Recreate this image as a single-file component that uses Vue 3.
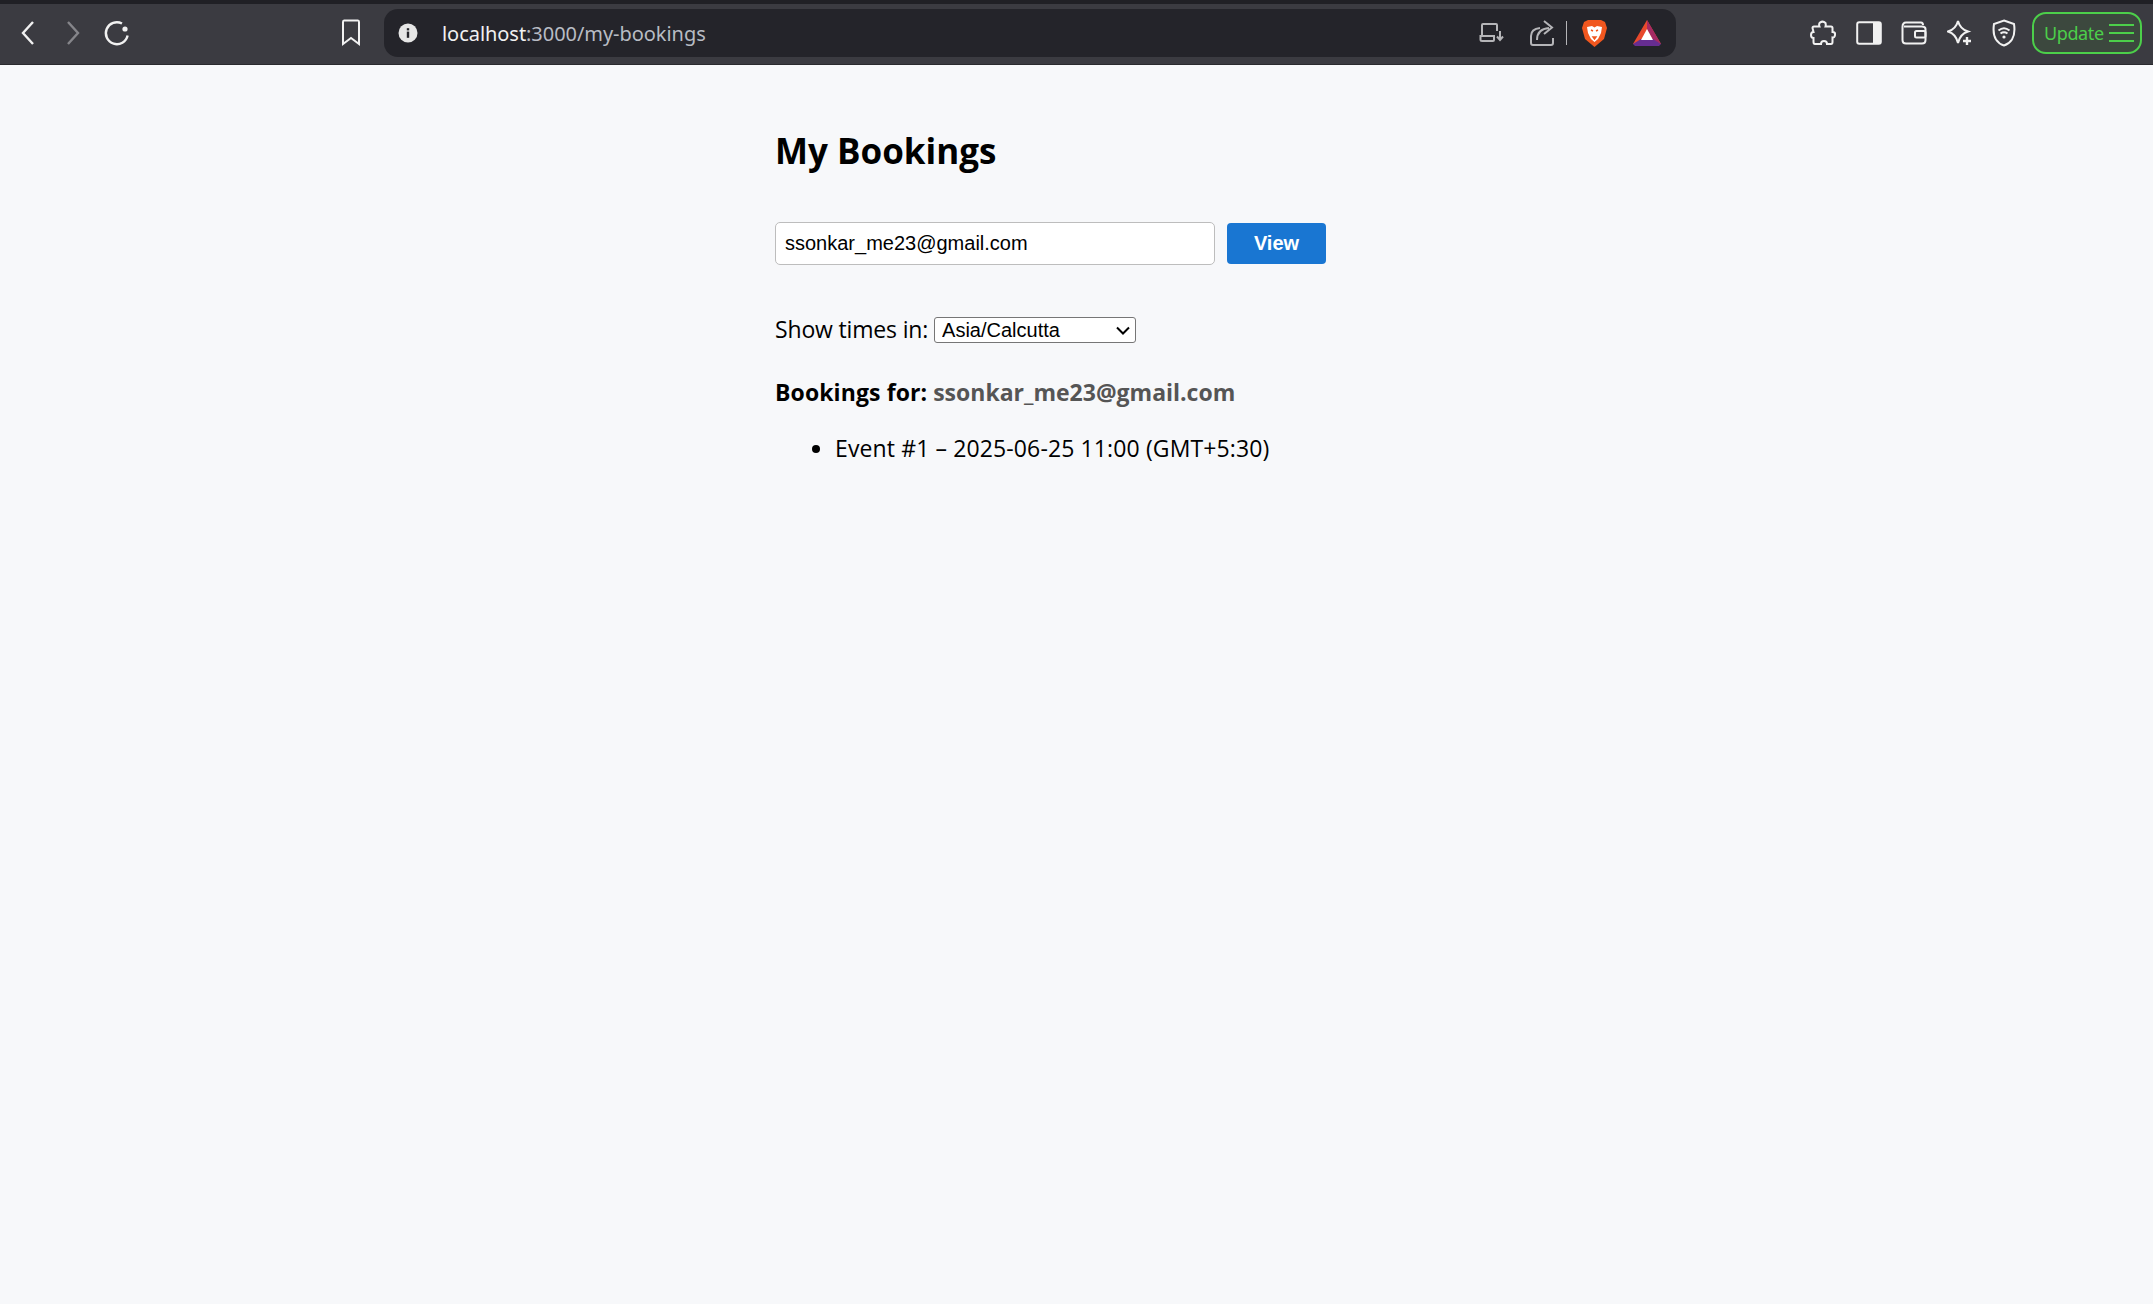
<template>
  <div class="page">
    <header class="toolbar">
      <div class="nav">
        <button class="tool back">
          <svg width="18" height="26" viewBox="0 0 18 26"><path d="M14 2 L4 13 L14 24" class="stroke" /></svg>
        </button>
        <button class="tool forward">
          <svg width="18" height="26" viewBox="0 0 18 26"><path d="M4 2 L14 13 L4 24" class="stroke dim" /></svg>
        </button>
        <button class="tool reload">
          <svg width="28" height="28" viewBox="0 0 28 28">
            <path d="M19 4.5 A11 11 0 1 0 24.6 16.5" class="stroke" />
            <circle cx="22" cy="10" r="2.6" fill="#f1f1f1" />
          </svg>
        </button>
      </div>
      <button class="tool bookmark">
        <svg width="20" height="28" viewBox="0 0 20 28"><path d="M3 1.5 H17 Q18 1.5 18 3 V25 L10 19 L2 25 V3 Q2 1.5 3 1.5 Z" class="stroke thin" /></svg>
      </button>
      <div class="address">
        <svg class="info" width="20" height="20" viewBox="0 0 20 20">
          <circle cx="10" cy="10" r="9.5" fill="#e6e6e6" />
          <rect x="8.8" y="8.6" width="2.4" height="6.2" fill="#24242a" />
          <rect x="8.8" y="5.2" width="2.4" height="2.2" fill="#24242a" />
        </svg>
        <span class="url"><span class="host">localhost</span>:3000/my-bookings</span>
        <div class="address-actions">
          <svg width="26" height="22" viewBox="0 0 26 22" class="gray">
            <path d="M3 13 V3 Q3 2 4 2 H17 Q18 2 18 3 V9" class="stroke thin" />
            <path d="M1.5 14 H15 V18 Q15 19 14 19 H3 Q1.5 19 1.5 17.5 Z" class="stroke thin" />
            <path d="M21 9 V17 M18 14.5 L21 18 L24 14.5" class="stroke thin" />
          </svg>
          <svg width="26" height="28" viewBox="0 0 26 28" class="gray share">
            <path d="M11 9 Q2 10 2 17 V24 Q2 26 4 26 H22 Q24 26 24 24 V19" class="stroke thin" />
            <path d="M8 21 Q8 10 20 9 M15 2 L23 8.5 L15 15" class="stroke thin" />
          </svg>
          <span class="divider"></span>
          <svg width="25" height="28" viewBox="0 0 25 28" class="lion">
            <path d="M6 1 H19 L23 3 L25 9 L22 20 L12.5 28 L3 20 L0 9 L2 3 Z" fill="#f1571f" />
            <path d="M5 8 L10 7 L12.5 8.5 L15 7 L20 8 L19 14 L16 20 L12.5 23 L9 20 L6 14 Z" fill="#fff" />
            <path d="M9 11 L11 12 M16 11 L14 12 M11 18 H14 L12.5 20 Z" stroke="#f1571f" stroke-width="1.4" fill="#f1571f" />
          </svg>
          <svg width="28" height="26" viewBox="0 0 28 26" class="bat">
            <path d="M14 0 L28 24 H0 Z" fill="#e8492c" />
            <path d="M14 0 L28 24 L20 20 L14 9 Z" fill="#a52a63" />
            <path d="M0 24 L8 19 H20 L28 24 L26 26 H2 Z" fill="#662d91" />
            <path d="M14 9 L20 20 H8 Z" fill="#fff" />
          </svg>
        </div>
      </div>
      <div class="extensions">
        <svg width="26" height="26" viewBox="0 0 26 26">
          <path d="M10 2.5 Q13 0.5 15.5 3 Q16 5 15.5 6.5 H21 Q22.5 6.5 22.5 8 V12 Q25.5 12 25 15 Q24.5 18 22.5 17.5 V22 Q22.5 24 21 24 H17 Q17 21 14 21 Q11 21 11 24 H5 Q3.5 24 3.5 22 V18 Q1 18 1 15 Q1 12 3.5 12 L2.5 8 Q2.5 6.5 4 6.5 H9.5 Q8.5 4 10 2.5 Z" class="stroke thin" />
        </svg>
        <svg width="26" height="24" viewBox="0 0 26 24">
          <rect x="1.2" y="1.2" width="23.6" height="21.6" rx="2" class="stroke thin" />
          <rect x="17" y="1.2" width="7.8" height="21.6" fill="#f1f1f1" />
        </svg>
        <svg width="26" height="24" viewBox="0 0 26 24">
          <path d="M1.5 6 Q1.5 1.5 5 1.5 H20 Q22 1.5 22 4 M1.5 6 V19 Q1.5 22.5 5 22.5 H21 Q24.5 22.5 24.5 19 V8 Q24.5 5.5 21 5.5 H3" class="stroke thin" />
          <rect x="14" y="10" width="10.5" height="6.5" rx="1.5" class="stroke thin" />
        </svg>
        <svg width="26" height="28" viewBox="0 0 26 28">
          <path d="M11 2 Q13 10 21 12.5 Q13 15 11 24 Q9 15 1 12.5 Q9 10 11 2 Z" class="stroke thin" />
          <path d="M20 18 V26 M16 22 H24" class="stroke" />
        </svg>
        <svg width="24" height="28" viewBox="0 0 24 28">
          <path d="M12 1.5 L22 5 Q23.5 15 20 20.5 Q17 25 12 26.5 Q7 25 4 20.5 Q0.5 15 2 5 Z" class="stroke thin" />
          <path d="M6.5 11.5 Q12 7 17.5 11.5 M8.5 14.5 Q12 12 15.5 14.5" class="stroke thin" />
          <circle cx="12" cy="18" r="1.6" fill="#f1f1f1" />
        </svg>
      </div>
      <button class="update">
        <span>Update</span>
        <svg width="25" height="20" viewBox="0 0 25 20"><path d="M0 2 H25 M0 10 H25 M0 18 H25" stroke="#4ccf4a" stroke-width="2" /></svg>
      </button>
    </header>

    <main class="content">
      <h1>My Bookings</h1>
      <form class="lookup" @submit.prevent>
        <input v-model="email" type="email" />
        <button type="submit">View</button>
      </form>
      <div class="zone">
        <label for="tz">Show times in:</label>
        <div class="select-wrap">
          <select id="tz" v-model="zone">
            <option>Asia/Calcutta</option>
          </select>
          <svg class="caret" width="14" height="9" viewBox="0 0 14 9"><path d="M1 1.5 L7 7.5 L13 1.5" fill="none" stroke="#000" stroke-width="2" /></svg>
        </div>
      </div>
      <p class="for"><strong>Bookings for:</strong> <span>{{ email }}</span></p>
      <ul>
        <li v-for="b in bookings" :key="b.id">Event #{{ b.id }} – {{ b.when }}</li>
      </ul>
    </main>
  </div>
</template>

<script setup>
import { ref } from "vue";

const email = ref("ssonkar_me23@gmail.com");
const zone = ref("Asia/Calcutta");
const bookings = [{ id: 1, when: "2025-06-25 11:00 (GMT+5:30)" }];
</script>

<style scoped>
.page {
  min-height: 1304px;
  background: #f7f8fa;
  font-family: "Open Sans", "Noto Sans", sans-serif;
  color: #000;
}
.toolbar {
  height: 65px;
  box-sizing: border-box;
  border-top: 4px solid #202025;
  border-bottom: 1px solid #2a2a2e;
  background: #3b3b41;
  display: flex;
  align-items: center;
  padding-left: 19px;
  padding-right: 7px;
  padding-bottom: 2px;
}
.tool {
  background: none;
  border: 0;
  padding: 0;
  display: flex;
}
.nav {
  display: flex;
  align-items: center;
  gap: 27px;
  width: 322px;
}
.reload {
  margin-left: -6px;
}
.bookmark {
  margin-right: 23px;
}
.stroke {
  fill: none;
  stroke: #f1f1f1;
  stroke-width: 2.4;
}
.stroke.thin {
  stroke-width: 2;
}
.stroke.dim {
  stroke: #85858a;
}
.gray .stroke {
  stroke: #b5b5b8;
}
.address {
  width: 1292px;
  height: 48px;
  border-radius: 14px;
  background: #24242a;
  display: flex;
  align-items: center;
  padding-left: 14px;
  padding-right: 15px;
  box-sizing: border-box;
}
.url {
  margin-left: 24px;
  font-size: 20px;
  font-family: "Noto Sans", sans-serif;
  color: #b8bcc4;
  letter-spacing: -0.05px;
}
.host {
  color: #f1f1f1;
}
.address-actions {
  margin-left: auto;
  display: flex;
  align-items: center;
}
.share {
  margin-left: 24px;
}
.divider {
  width: 1px;
  height: 24px;
  background: #b5b5b8;
  margin-left: 11px;
}
.lion {
  margin-left: 15px;
}
.bat {
  margin-left: 26px;
}
.extensions {
  display: flex;
  align-items: center;
  gap: 19.5px;
  margin-left: 134px;
}
.update {
  margin-left: 16px;
  width: 110px;
  height: 42px;
  box-sizing: border-box;
  border: 2px solid #4ccf4a;
  border-radius: 14px;
  background: #3c483e;
  color: #4ccf4a;
  font-family: "Noto Sans", sans-serif;
  font-size: 18px;
  letter-spacing: -0.4px;
  display: flex;
  align-items: center;
  justify-content: space-between;
  padding: 0 6px 0 10px;
}
.content {
  width: 603px;
  margin: 0 auto;
  padding-top: 63px;
}
h1 {
  margin: 0;
  font-size: 35px;
  line-height: 46px;
  font-weight: 700;
}
.lookup {
  margin-top: 48px;
  display: flex;
  align-items: center;
  gap: 12px;
}
.lookup input {
  width: 440px;
  height: 43px;
  box-sizing: border-box;
  border: 1px solid #bdbdbd;
  border-radius: 5px;
  background: #fff;
  padding: 0 9px;
  font-family: "Liberation Sans", Arial, sans-serif;
  font-size: 20px;
  color: #000;
  outline: none;
}
.lookup button {
  width: 99px;
  height: 41px;
  border: 0;
  border-radius: 4px;
  background: #1976d2;
  color: #fff;
  font-family: "Liberation Sans", Arial, sans-serif;
  font-weight: 700;
  font-size: 20px;
}
.zone {
  margin-top: 48px;
  display: flex;
  align-items: center;
  gap: 6px;
  font-size: 23px;
  letter-spacing: -0.17px;
}
.select-wrap {
  position: relative;
  display: flex;
  top: 1px;
}
.zone select {
  appearance: none;
  width: 202px;
  height: 26px;
  padding: 0 0 0 7px;
  font-family: "Liberation Sans", Arial, sans-serif;
  font-size: 20px;
  background: #fff;
  border: 1px solid #767676;
  border-radius: 3px;
  color: #000;
}
.caret {
  position: absolute;
  right: 6px;
  top: 9px;
  pointer-events: none;
}
.for {
  margin: 31px 0 0;
  font-size: 23px;
}
.for strong {
  letter-spacing: 0.1px;
}
.for span {
  color: #555;
  font-weight: 700;
}
ul {
  margin: 24px 0 0;
  padding-left: 60px;
  font-size: 23px;
  letter-spacing: 0.12px;
}
</style>
